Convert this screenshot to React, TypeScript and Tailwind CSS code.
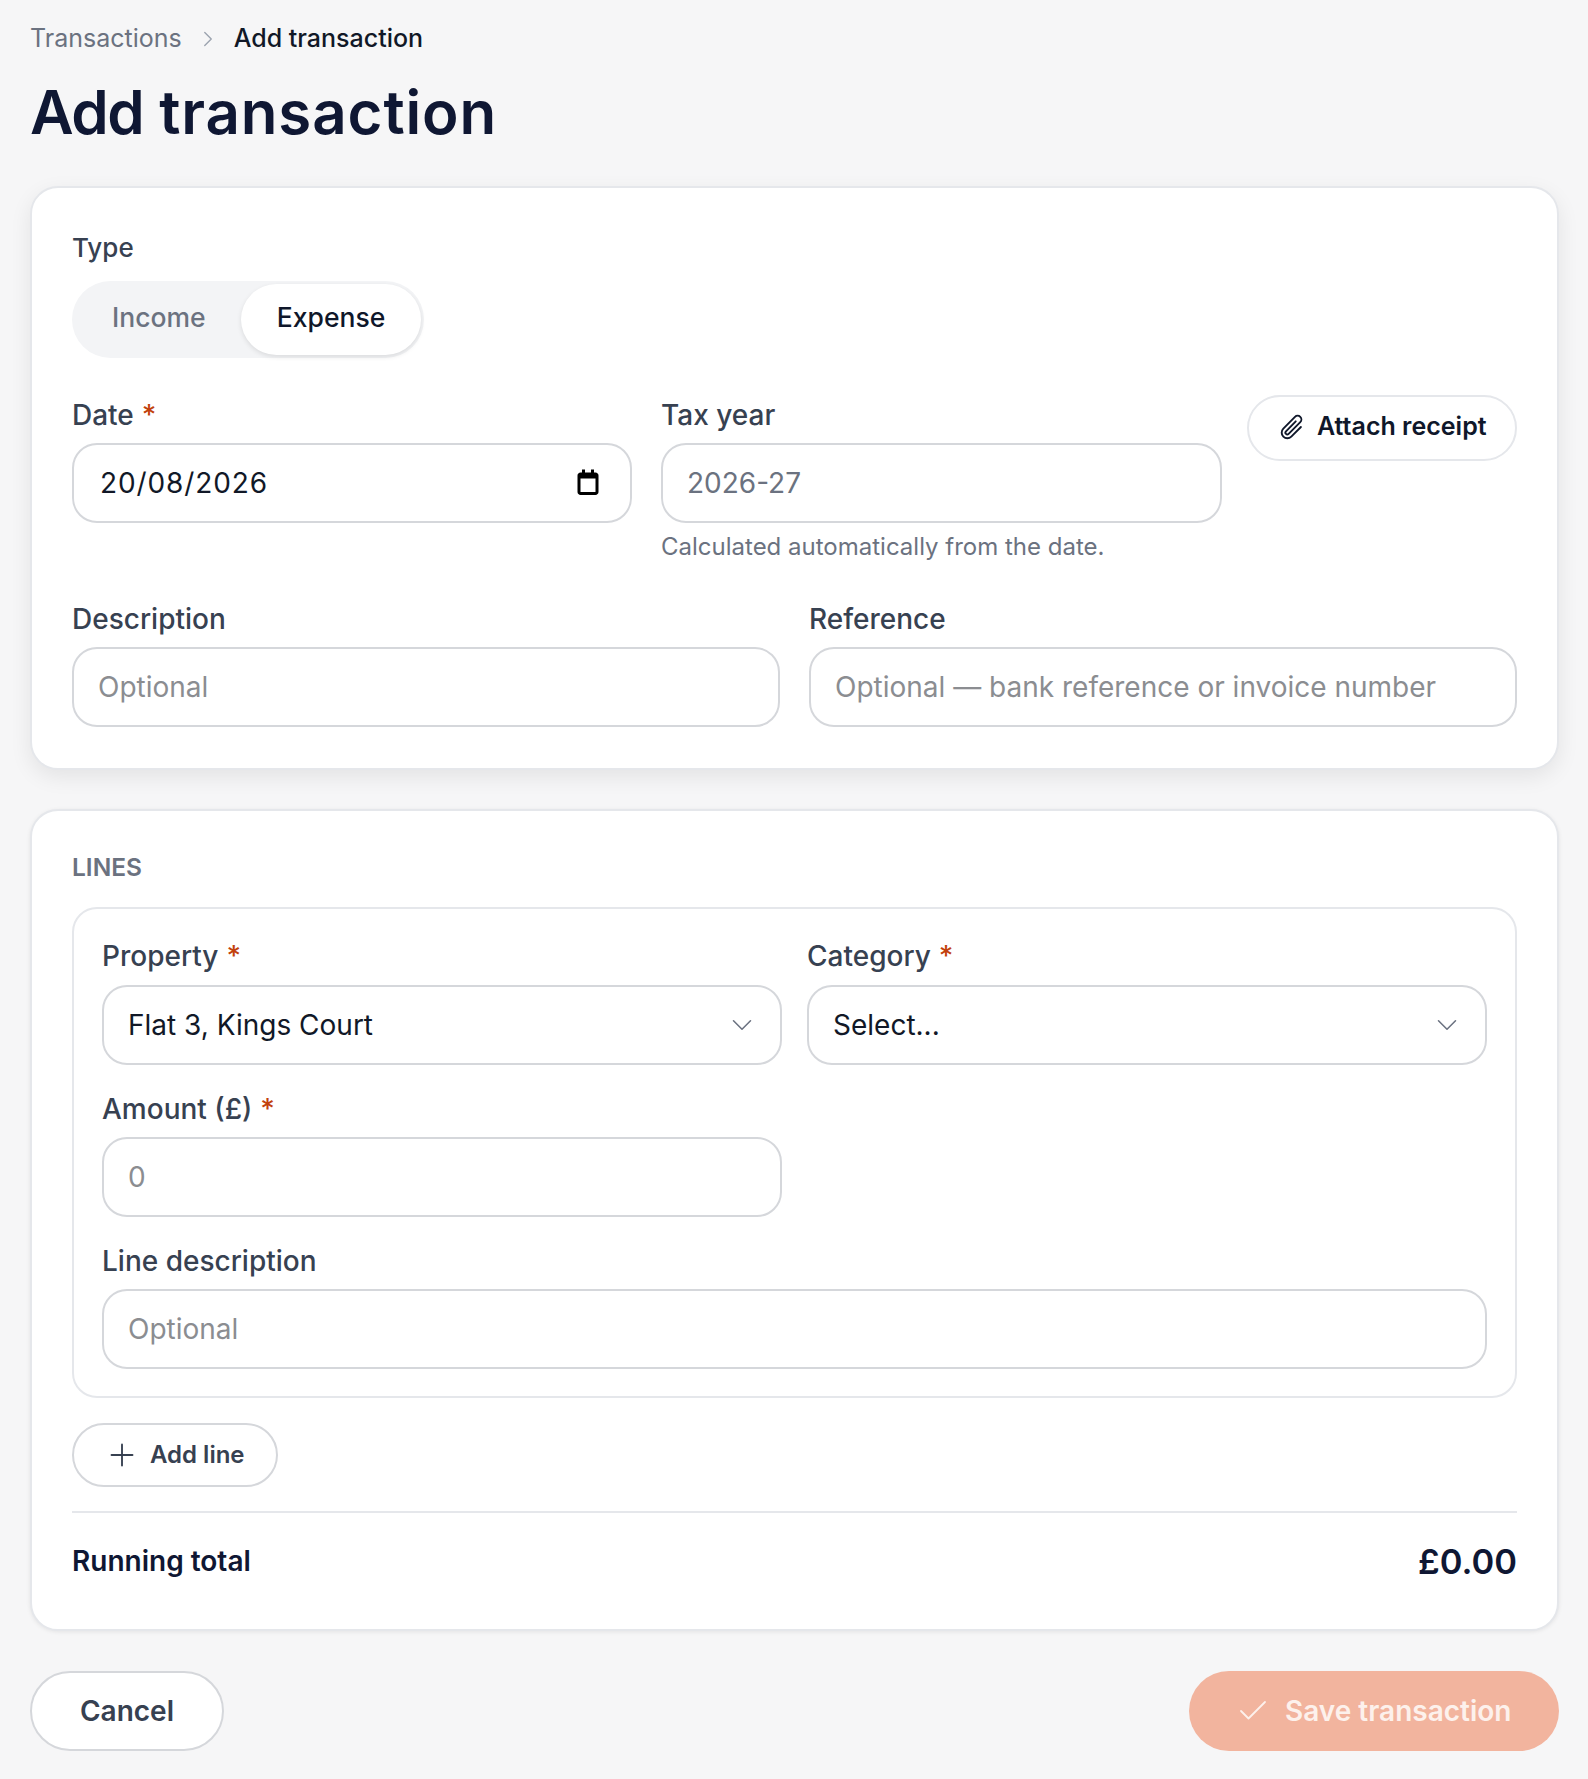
import React from 'react';
import { Check, ChevronDown, ChevronRight, Plus } from 'lucide-react';
import { PiPaperclip } from 'react-icons/pi';

const Req = () => <span className="ml-[8px] text-[#c2410c]">*</span>;

const Label = ({ children, required }: { children: React.ReactNode; required?: boolean }) => (
  <label className="block h-[37px] text-[28px] leading-[37px] font-medium text-[#374151]">
    {children}
    {required && <Req />}
  </label>
);

const Field = ({ placeholder, value, muted }: { placeholder?: string; value?: string; muted?: boolean }) => (
  <input
    readOnly
    placeholder={placeholder}
    value={value ?? ''}
    className={`block h-[80px] w-full rounded-[25px] border-2 border-[#d5d7db] bg-white px-[24px] text-[28px] outline-none placeholder:text-[#8b8d91] ${
      muted ? 'text-[#6b7280]' : 'text-[#111827]'
    }`}
  />
);

const SelectBox = ({ value }: { value: string }) => (
  <div className="flex h-[80px] items-center justify-between rounded-[25px] border-2 border-[#d5d7db] bg-white pl-[24px] pr-[21px] text-[28px] text-[#111827]">
    <span>{value}</span>
    <ChevronDown size={34} strokeWidth={1.1} className="text-[#6b7280]" />
  </div>
);

const CalendarIcon = () => (
  <svg width="30" height="30" viewBox="0 0 20 20" fill="#000" className="shrink-0">
    <path d="M15 3h-1V1h-2v2H8V1H6v2H5C3.9 3 3 3.9 3 5v11c0 1.1.9 2 2 2h10c1.1 0 2-.9 2-2V5c0-1.1-.9-2-2-2zm0 13H5V7h10v9z" />
  </svg>
);

export default function App() {
  return (
    <div className="min-h-[1779px] bg-[#f6f6f7] pl-[30px] pr-[29px] pt-[20px] font-[Inter,sans-serif]">
      <nav className="flex h-[38px] items-center text-[25px]">
        <span className="text-[#6b7280]">Transactions</span>
        <ChevronRight size={26} strokeWidth={1.25} className="mx-[13px] text-[#9ca3af]" />
        <span className="font-medium text-[#111827]">Add transaction</span>
      </nav>
      <h1 className="mt-[18px] h-[72px] text-[60px] leading-[72px] font-semibold tracking-[0.9px] text-[#0f1733]">
        <span className="tracking-[-1.5px]">Add</span> transaction
      </h1>

      <section className="mt-[38px] h-[584px] rounded-[28px] border-2 border-[#e5e7eb] bg-white px-[40px] pt-[41px] shadow-[0_7px_21px_rgba(0,0,0,0.08)]">
        <label className="block h-[37px] text-[26px] leading-[37px] font-medium text-[#374151]">Type</label>
        <div className="mt-[15px] flex h-[77px] w-[352px] items-center rounded-full bg-[#f3f4f6] p-[3px]">
          <div className="w-[166px] pb-[3px] pl-[37px] text-[26.5px] font-medium text-[#6b7280]">Income</div>
          <div className="flex h-[71px] w-[180px] items-center justify-center rounded-full bg-white pb-[3px] text-[26.5px] font-medium text-[#0f172a] shadow-[0_2px_5px_rgba(0,0,0,0.1)]">
            Expense
          </div>
        </div>

        <div className="mt-[39px] flex">
          <div className="w-[560px]">
            <Label required>Date</Label>
            <div className="mt-[9px] flex h-[80px] items-center justify-between rounded-[25px] border-2 border-[#d5d7db] bg-white pl-[26px] pr-[27px] text-[28px] tracking-[0.9px] text-[#111827]">
              <span>20/08/2026</span>
              <CalendarIcon />
            </div>
          </div>
          <div className="ml-[29px] w-[561px]">
            <Label>Tax year</Label>
            <div className="mt-[9px]">
              <Field value="2026-27" muted />
            </div>
            <p className="mt-[10px] text-[24px] leading-[28px] text-[#6b7280]">Calculated automatically from the date.</p>
          </div>
          <div className="ml-auto mt-[-2px]">
            <button className="flex h-[66px] w-[270px] items-center gap-[10px] rounded-full border-2 border-[#e5e7eb] bg-white pb-[2px] pl-[28px] text-[25px] font-semibold text-[#0f172a]">
              <PiPaperclip size={30} />
              Attach receipt
            </button>
          </div>
        </div>

        <div className="mt-[40px] grid grid-cols-2 gap-[29px]">
          <div>
            <Label>Description</Label>
            <div className="mt-[9px]">
              <Field placeholder="Optional" />
            </div>
          </div>
          <div>
            <Label>Reference</Label>
            <div className="mt-[9px]">
              <Field placeholder="Optional — bank reference or invoice number" />
            </div>
          </div>
        </div>
      </section>

      <section className="mt-[39px] h-[822px] rounded-[28px] border-2 border-[#e5e7eb] bg-white px-[40px] pt-[41px] shadow-[0_1px_4px_rgba(0,0,0,0.08)]">
        <div className="h-[30px] text-[24.5px] leading-[30px] font-semibold text-[#6b7280] uppercase">Lines</div>
        <div className="mt-[25px] h-[491px] rounded-[25px] border-2 border-[#e5e7eb] px-[28px] pt-[29px]">
          <div className="grid grid-cols-2 gap-[25px]">
            <div>
              <Label required>Property</Label>
              <div className="mt-[10px]">
                <SelectBox value="Flat 3, Kings Court" />
              </div>
            </div>
            <div>
              <Label required>Category</Label>
              <div className="mt-[10px]">
                <SelectBox value="Select..." />
              </div>
            </div>
          </div>
          <div className="mt-[26px] w-[calc(50%-12.5px)]">
            <Label required>Amount (£)</Label>
            <div className="mt-[9px]">
              <Field placeholder="0" />
            </div>
          </div>
          <div className="mt-[26px]">
            <Label>Line description</Label>
            <div className="mt-[9px]">
              <Field placeholder="Optional" />
            </div>
          </div>
        </div>

        <button className="mt-[25px] flex h-[64px] w-[206px] items-center gap-[10px] rounded-full border-2 border-[#d5d7db] bg-white pl-[30px] text-[24px] font-semibold text-[#374151]">
          <Plus size={36} strokeWidth={1.25} />
          Add line
        </button>
        <div className="mt-[24px] border-t-2 border-[#e5e7eb]" />
        <div className="mt-[23px] flex items-center justify-between">
          <span className="pb-[2px] text-[28px] font-semibold text-[#0f1733]">Running total</span>
          <span className="text-[34.5px] font-semibold text-[#0f1733]">£0.00</span>
        </div>
      </section>

      <div className="mt-[40px] flex items-center justify-between">
        <button className="h-[80px] w-[194px] rounded-full border-2 border-[#d5d7db] bg-white text-[28px] font-semibold text-[#374151]">
          Cancel
        </button>
        <button className="flex h-[80px] w-[370px] items-center gap-[14px] rounded-full bg-[#f2b49e] pl-[46px] text-[28px] font-semibold text-[#fdf1ec]">
          <Check size={36} strokeWidth={1.2} />
          Save transaction
        </button>
      </div>
    </div>
  );
}
